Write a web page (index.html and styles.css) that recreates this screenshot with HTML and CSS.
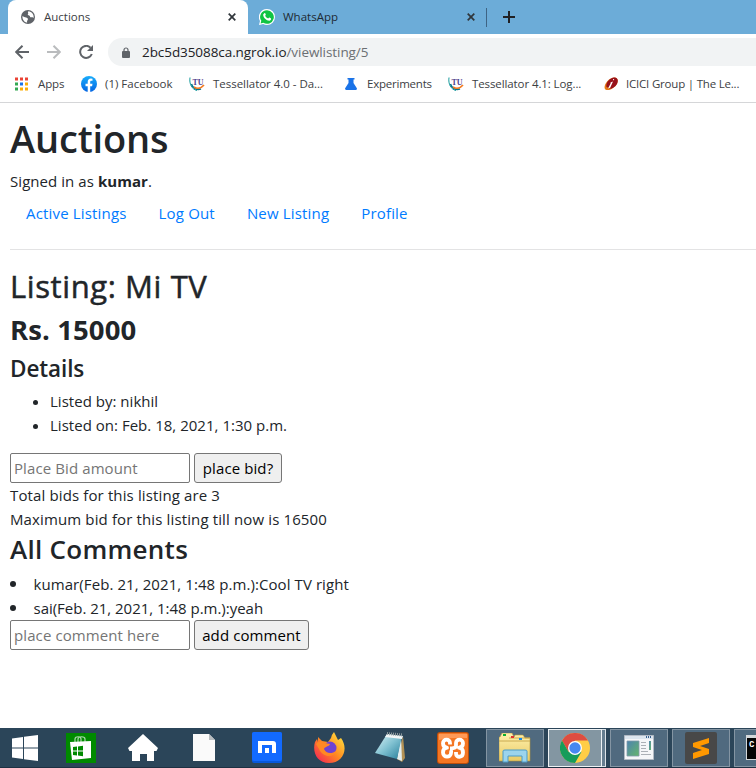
FILE: index.html
```html
<!DOCTYPE html>
<html lang="en">
<head>
<meta charset="utf-8">
<title>Auctions</title>
<link rel="stylesheet" href="styles.css">
</head>
<body>
<svg width="0" height="0" class="defs">
  <defs>
    <symbol id="tu" viewBox="0 0 16 16">
      <path d="M1 1.500C0 8 3 13.500 8 14.500" fill="none" stroke="#159a9c" stroke-width="1"/>
      <path d="M2.500 8c1 4 5 6.500 9.500 5" fill="none" stroke="#08758b" stroke-width="1.500"/>
      <path d="M5 11c3 2 7 1.500 10-2" fill="none" stroke="#f47b20" stroke-width="1.700"/>
      <text x="3.500" y="8.700" font-family="Liberation Serif, serif" font-weight="700" font-size="8.500" textLength="11" lengthAdjust="spacingAndGlyphs" fill="#51428b">TU</text>
    </symbol>
    <linearGradient id="fb" x2="0" y2="1"><stop stop-color="#19adfb"/><stop offset="1" stop-color="#0565e2"/></linearGradient>
    <linearGradient id="fox" x1="1" y1="0" x2="0" y2="1"><stop stop-color="#fff044"/><stop offset=".5" stop-color="#ff8a20"/><stop offset="1" stop-color="#f3155e"/></linearGradient>
    <linearGradient id="note" x2="1" y2="1"><stop stop-color="#e0f6fa"/><stop offset=".5" stop-color="#80c1d1"/><stop offset="1" stop-color="#267e9b"/></linearGradient>
    <linearGradient id="folder" x2="0" y2="1"><stop stop-color="#fff1ae"/><stop offset="1" stop-color="#e9cb66"/></linearGradient>
    <linearGradient id="pane" x2="1" y2="1"><stop stop-color="#4e83b0"/><stop offset="1" stop-color="#65b66b"/></linearGradient>
  </defs>
</svg>
<header class="browser">
  <div class="tabs">
    <div class="tab tab-active">
      <svg class="globe" viewBox="0 0 14 14"><circle cx="7" cy="7" r="7" fill="#5f6368"/><path d="M1.500 6C3 7.500 5 7 6.500 8.200 8 9.500 5.500 10 6.200 12.600 3.500 12.500 1 9.500 1.500 6ZM7.500 1.200C6 2.500 8 2.700 7 4 5.800 5.300 9 5 9 6.500c0 1.500 2.200 0 3.700 1.500C13 4 10.500 1.500 7.500 1.200Z" fill="#fff"/></svg>
      <span>Auctions</span>
      <svg class="close" viewBox="0 0 8 8"><path d="m.7.700 6.600 6.600m0-6.600L.7 7.300"/></svg>
    </div>
    <div class="tab tab-idle">
      <svg class="wa" viewBox="0 0 16 16"><path d="M8 0a8 8 0 0 1 0 16c-1.400 0-2.700-.3-3.800-.9L0 16l1-4A8 8 0 0 1 8 0Z" fill="#fff"/><path d="M8 1.200a6.800 6.800 0 1 1-3.700 12.500l-2.700.7.700-2.600A6.800 6.800 0 0 1 8 1.200Z" fill="#10c443"/><path d="M5.300 4.200c.5-.4.900-.1 1 .2l.5 1.200c.1.500-.6.900-.6 1.200.6 1.300 1.700 2.200 3 2.600.3 0 .8-1 1.200-.8l1.400.7c.8.600-.2 2.500-1.500 2.500C7.200 11.600 4.300 8.500 4.200 6c0-.8.500-1.300 1.100-1.800Z" fill="#fff"/></svg>
      <span>WhatsApp</span>
      <svg class="close" viewBox="0 0 8 8"><path d="m.7.700 6.600 6.600m0-6.600L.7 7.300"/></svg>
    </div>
    <i class="tab-divider"></i>
    <svg class="plus" viewBox="0 0 12 12"><path d="M6 0v12M0 6h12"/></svg>
  </div>
  <div class="toolbar">
    <svg class="arrow" viewBox="0 0 14 14"><path d="M14 7H1.500M7.500.700 1.200 7l6.300 6.300"/></svg>
    <svg class="arrow forward" viewBox="0 0 14 14"><path d="M0 7h12.500M6.500.700 12.800 7l-6.300 6.300"/></svg>
    <svg class="reload" viewBox="0 0 14 14"><path d="M11.500 2.700A6 6 0 1 0 12.800 9" fill="none" stroke="#5f6368" stroke-width="2"/><path d="M14 0v6H8Z" fill="#5f6368"/></svg>
    <div class="omnibox">
      <svg class="lock" viewBox="0 0 8 11"><path d="M2 5V3a2 2 0 0 1 4 0v2" fill="none" stroke="#5f6368" stroke-width="1.200"/><rect y="4" width="8" height="7" rx="1" fill="#5f6368"/></svg>
      <span class="url">2bc5d35088ca.ngrok.io<em>/viewlisting/5</em></span>
    </div>
  </div>
  <nav class="bookmarks">
    <a class="bm bm-apps"><svg viewBox="0 0 13 13"><path d="M0 0h3v3H0zM5 0h3v3H5zM10 0h3v3h-3z" fill="#ea4335"/><path d="M0 5h3v3H0zM0 10h3v3H0z" fill="#34a853"/><path d="M5 5h3v3H5z" fill="#1a73e8"/><path d="M10 5h3v3h-3zM5 10h3v3H5zM10 10h3v3h-3z" fill="#fbad05"/></svg><span>Apps</span></a>
    <a class="bm bm-fb"><svg viewBox="0 0 16 16"><circle cx="8" cy="8" r="8" fill="url(#fb)"/><path d="M6.700 16v-5.800H4.500V7.800h2.200V6c0-2.200 1.200-3.400 3.200-3.400l1.600.2v2h-1.100c-.9 0-1.200.5-1.200 1.200v1.800h2.300l-.4 2.400H9.200V16Z" fill="#fff"/></svg><span>(1) Facebook</span></a>
    <a class="bm bm-t0"><svg viewBox="0 0 16 16"><use href="#tu"/></svg><span>Tessellator 4.0 - Da...</span></a>
    <a class="bm bm-exp"><svg viewBox="0 0 12 12"><path d="M2.500 0h7v1.500h-1V5l3.200 5c.7 1-.1 2-1 2H1.300c-1 0-1.700-1-1-2l3.200-5V1.500h-1Z" fill="#1a73e8"/></svg><span>Experiments</span></a>
    <a class="bm bm-t1"><svg viewBox="0 0 16 16"><use href="#tu"/></svg><span>Tessellator 4.1: Log...</span></a>
    <a class="bm bm-icici"><svg viewBox="0 0 14 14"><path d="M1 12C-1 9 4 1 10 .5c5-.3 4.500 5 1.500 8.500C7 13.500 2 14 1 12Z" fill="#e67a17"/><path d="M2.500 10C1.500 6 5.500 1 10 .5c5-.3 4.500 5 1.500 8.500C9.500 11 7 12 6 11.500Z" fill="#98121b"/><path d="M9 2.200c1.800-.5 1.500 1 .2 1.300M6.500 5.500 9 4.600 6.200 10.800 4 11.500l2.600-5Z" fill="#fff"/></svg><span>ICICI Group | The Le...</span></a>
  </nav>
</header>
<main class="page">
  <h1>Auctions</h1>
  <div class="line signed">Signed in as <strong>kumar</strong>.</div>
  <ul class="nav">
    <li><a>Active Listings</a></li>
    <li><a>Log Out</a></li>
    <li><a>New Listing</a></li>
    <li><a>Profile</a></li>
  </ul>
  <hr>
  <h2>Listing: Mi TV</h2>
  <h3 class="price">Rs. 15000</h3>
  <h4>Details</h4>
  <ul class="details">
    <li>Listed by: nikhil</li>
    <li>Listed on: Feb. 18, 2021, 1:30 p.m.</li>
  </ul>
  <form class="row"><input type="text" placeholder="Place Bid amount"><button type="button" class="b1">place bid?</button></form>
  <div class="line">Total bids for this listing are 3</div>
  <div class="line">Maximum bid for this listing till now is 16500</div>
  <h3 class="all">All Comments</h3>
  <ul class="comments">
    <li>kumar(Feb. 21, 2021, 1:48 p.m.):Cool TV right</li>
    <li class="tight">sai(Feb. 21, 2021, 1:48 p.m.):yeah</li>
  </ul>
  <form class="row"><input type="text" placeholder="place comment here"><button type="button" class="b2">add comment</button></form>
</main>
<footer class="taskbar">
  <div class="slot first"><svg width="26" height="26" viewBox="0 0 26 26"><path d="M0 3.500 11 2v10.500H0ZM12 1.800 26 0v12.500H12ZM0 13.500h11V24L0 22.500ZM12 13.500h14V26l-14-1.800Z" fill="#fff"/></svg></div>
  <div class="slot"><svg width="30" height="30" viewBox="0 0 30 30"><path fill="#008a00" d="M0 0h30v30H0z"/><path d="M9 10V6c0-3 6-3 6 0v3m-3 0V6c0-3 7-3 7 0v3" fill="none" stroke="#a9d8a9" stroke-width="1.200"/><path d="m4 9 21-1v17L6 27Z" fill="#fff"/><path d="m7 14 4-.5v4H7Zm5-.6 5-.6v4.700h-5ZM7 18.500h4v4L7 22Zm5 0h5v4.700l-5-.6Z" fill="#008a00"/></svg></div>
  <div class="slot"><svg width="30" height="28" viewBox="0 0 30 28"><path d="m15 0 15 14-1.500 3H26v10h-7v-7h-7v7H4V17H1.500L0 14Z" fill="#fff"/></svg></div>
  <div class="slot page-icon"><svg width="22" height="27" viewBox="0 0 22 27"><path d="M0 0h16l6 6v21H0Z" fill="#fafafa"/><path d="M16 0v6h6Z" fill="#b8bcbf"/></svg></div>
  <div class="slot"><svg width="30" height="31" viewBox="0 0 30 31"><rect width="30" height="31" rx="2" fill="#0758dc"/><rect width="30" height="29" rx="2" fill="#126aff"/><path d="M6 9h15q3 0 3 3v9h-4v-8H10v8H6Z" fill="#fff"/><path d="M13 16h4v5h-4z" fill="#fff"/></svg></div>
  <div class="slot"><svg width="31" height="31" viewBox="0 0 31 31"><path d="M4 5 8 9l6 1 3-4q1-4 3-6l4 8 3-2c8 11 2 25-12 25C3 31-2 20 1 10l2-3 1 3Z" fill="url(#fox)"/><circle cx="16" cy="16" r="6.500" fill="#6f43d2"/><path d="M2 12c4-4 8-2 9-1l5 1c-1 3-5 2-6 5 2 5 8 5 12 2-2 7-13 7-17-2Z" fill="#ff8824"/></svg></div>
  <div class="slot"><svg width="32" height="31" viewBox="0 0 32 31"><path d="m28 4 2 22-3 4-5-3Z" fill="#b29155"/><path d="m26 4 1 25-5-2Z" fill="#e3edef"/><path d="m12 2 15 2-5 23-22-6Z" fill="url(#note)"/><path d="m12 2 16 2-1 3-17-2Z" fill="#f2f6f7"/><path d="m12 1.500 16 1.500" stroke="#8e9b9e" stroke-width="3" stroke-dasharray="1 1"/></svg></div>
  <div class="slot"><svg width="32" height="32" viewBox="0 0 32 32"><rect width="32" height="32" rx="3" fill="#bc4d0b"/><rect x="1" y="1" width="30" height="30" rx="2" fill="#f47623"/><path d="M2 2h28v4Q16 5 2 8Z" fill="#ff9a57"/><path d="M13 12.500V11C13 6.500 6 6.500 6 11.200c0 2.300 1.500 4.200 4 4.500C7.500 16 6 17.700 6 20.500c0 5.500 8 5.500 8 .500 0-2 .5-2.500 2-2.500M13 16.500c3 0 6-.500 6-3V11c0-4.500 7-4.500 7 .2 0 2.300-1.500 4.200-4 4.500 2.500.3 4 2 4 4.800 0 5.500-7 5.500-7 1V20" fill="none" stroke="#fff" stroke-width="3.800" stroke-linejoin="round"/></svg></div>
  <div class="task t-folder"><svg width="32" height="30" viewBox="0 0 32 30"><path d="M1 4 3 0h10l2 4 1-2h8l2 3h5v23H0V4Z" fill="url(#folder)" stroke="#b49439" stroke-width=".6"/><path d="M0 8h31M10 5h21" stroke="#caaa50"/><path d="M4 1h3v2H4z" fill="#0baf30"/><path d="M12 3h3v2h-3z" fill="#e3342f"/><path d="M20 5h3v2h-3z" fill="#1688e8"/><path d="M4 18q0-1 2-1h20q2 0 2 1v11h-5v-6H9v6H4Z" fill="#9cd4ed" stroke="#4c9cc8"/></svg></div>
  <div class="task t-chrome"><svg width="30" height="30" viewBox="0 0 30 30"><circle cx="15" cy="15" r="15" fill="#ffcd46"/><path d="M2 7.500A15 15 0 0 1 28 7.500H15L8.500 18.800Z" fill="#dd4d42"/><path d="M2 7.500A15 15 0 0 0 15 30l6.500-11.200H8.500Z" fill="#169c5a"/><circle cx="15" cy="15" r="7" fill="#fff"/><circle cx="15" cy="15" r="5.700" fill="#4688f1"/></svg></div>
  <i class="stack"></i>
  <div class="task"><svg width="30" height="25" viewBox="0 0 30 25"><path d="M.5.500h29v24H.5Z" fill="#f5f6f8" stroke="#b2bac4"/><path d="M1 1h28v3H1z" fill="#dce5ee"/><path d="M22 2h6" stroke="#355d8b" stroke-width="2" stroke-dasharray="1 1"/><path d="M3 6h12v15H3z" fill="url(#pane)" stroke="#809aaa" stroke-width=".8"/><path d="M17 7.500h5m-5 3h5m-5 3h5m-5 3h7m-7 3h10" stroke="#abb0b6"/><path d="M25 6h2v9h-2z" fill="url(#pane)"/></svg></div>
  <div class="task"><svg width="32" height="32" viewBox="0 0 32 32"><rect width="32" height="32" rx="2" fill="#484848"/><path d="m8 11 16-5v5l-9 3 9 3v5L8 27v-6l9-3-9-3Z" fill="#ff9800"/></svg></div>
  <div class="task t-cmd"><svg width="10" height="25" viewBox="0 0 10 25"><path fill="#050505" d="M0 0h10v25H0z"/><path fill="#d4d7da" d="M0 0h10v3H0zM0 0h1v25H0zM0 24h10v1H0z"/><text x="3" y="12" font-family="Liberation Mono, monospace" font-size="9" font-weight="700" fill="#fff">C</text></svg></div>
</footer>
</body>
</html>
```

FILE: styles.css
```css
* { box-sizing: border-box; }
body { margin: 0; width: 756px; height: 768px; overflow: hidden; display: flex; flex-direction: column; background: #fff; color: #212529; font: 15px/24px "Open Sans", sans-serif; white-space: nowrap; }
.defs { position: absolute; }
svg { display: block; flex: none; }
.browser { height: 103px; flex: none; border-bottom: 1px solid #d5d6d8; font-size: 11.5px; }
.tabs { height: 34px; background: #6cacd8; display: flex; align-items: center; padding-left: 8px; }
.tab { height: 34px; display: flex; align-items: center; color: #3c4043; }
.tab span { flex: 1; }
.tab-active { width: 240px; background: #fff; border-radius: 8px 8px 0 0; padding: 0 12px 0 13px; }
.globe { width: 14px; height: 14px; margin-right: 9px; }
.tab-idle { width: 238px; padding: 0 11px; color: #202a33; }
.wa { width: 16px; height: 16px; margin-right: 8px; }
.close { width: 8px; height: 8px; fill: none; stroke: #30363b; stroke-width: 1.7; }
.tab-divider { width: 1px; height: 19px; background: #3e6484; }
.plus { width: 12px; height: 12px; margin-left: 16px; stroke: #202124; stroke-width: 2; }
.toolbar { height: 38px; display: flex; align-items: center; padding: 0 0 2px 15px; }
.arrow { width: 14px; height: 14px; fill: none; stroke: #5f6368; stroke-width: 2; }
.forward { stroke: #babcbe; margin-left: 18px; }
.reload { width: 14px; height: 14px; margin-left: 18px; }
.omnibox { margin-left: 15px; flex: 1; height: 28px; border-radius: 14px 0 0 14px; background: #f1f3f4; display: flex; align-items: center; padding-left: 14px; }
.lock { width: 8px; height: 11px; margin-right: 12px; }
.url { font-size: 13.5px; letter-spacing: -.07px; color: #202124; }
.url em { font-style: normal; color: #6b6f73; }
.bookmarks { height: 24px; display: flex; align-items: center; color: #3c4043; letter-spacing: -.1px; }
.bm { display: flex; align-items: center; flex: none; }
.bm-apps { width: 66px; margin-left: 15px; gap: 10px; }
.bm-fb { width: 108px; gap: 8px; letter-spacing: 0; }
.bm svg { height: 16px; width: 16px; }
.bm.bm-apps svg { width: 13px; }
.bm-t0 { width: 156px; gap: 8px; letter-spacing: -.03px; }
.bm-exp { width: 103px; gap: 10px; letter-spacing: -.22px; }
.bm.bm-exp svg { width: 12px; }
.bm-t1 { width: 156px; gap: 8px; }
.bm-icici { gap: 8px; letter-spacing: -.2px; }
.bm.bm-icici svg { width: 14px; }
.page { flex: 1; padding: 10px 0 0 10px; }
h1, h2, h3, h4 { margin: 0; font-weight: 600; }
h1 { font-size: 38px; line-height: 50px; height: 56px; letter-spacing: -.15px; }
.line { height: 24px; letter-spacing: .13px; }
.signed { letter-spacing: .06px; }
.signed strong { font-weight: 700; }
.nav { list-style: none; display: flex; margin: 0; padding: 8px 0; height: 40px; color: #007bff; letter-spacing: .17px; }
.nav li { padding: 0 16px; }
hr { margin: 16px 0 15px; border: 0; height: 1px; background: #e3e3e4; }
h2 { font-size: 31px; font-weight: 400; line-height: 43px; height: 46px; letter-spacing: .6px; -webkit-text-stroke: .5px #212529; }
.price { font-size: 27.5px; font-weight: 700; line-height: 38px; height: 41px; letter-spacing: .1px; }
h4 { font-size: 22.5px; line-height: 33px; height: 37px; letter-spacing: -.1px; }
.details { margin: 0 0 16px; padding-left: 40px; letter-spacing: .02px; }
.row { display: flex; gap: 4px; height: 30px; margin: 0; }
.row input { width: 180px; height: 30px; border: 1px solid #767676; border-radius: 2px; padding: 1px 3px; font: inherit; letter-spacing: .1px; }
.row input::placeholder { color: #757575; opacity: 1; }
.row button { height: 30px; border: 1px solid #767676; border-radius: 3px; background: #efefef; color: #000; padding: 0; font: inherit; letter-spacing: .1px; }
.b1 { width: 88px; }
.b2 { width: 115px; }
.all { font-size: 26px; line-height: 36px; height: 41px; letter-spacing: .27px; }
.comments { margin: 0; padding: 0; list-style-position: inside; letter-spacing: .08px; }
.comments .tight { letter-spacing: -.02px; }
.comments li::marker { font-size: 16.5px; }
.taskbar { height: 40px; flex: none; background: #2b4559; display: flex; align-items: center; border-bottom: 1px solid #1d3042; }
.slot { width: 62px; display: flex; justify-content: center; flex: none; }
.page-icon { padding-right: 2px; }
.first { width: 50px; }
.task { flex: none; width: 58px; height: 38px; display: flex; align-items: center; justify-content: center; border: 1px solid #8495a3; background: #506a7f; margin-right: 4px; }
.t-folder { margin-left: 2px; }
.t-chrome { width: 54px; margin-right: 0; border-color: #eef2f4; background: #8396a2; }
.stack { width: 4px; height: 38px; border: 1px solid #dce3e8; border-left: 0; background: #667e90; margin-right: 4px; flex: none; }
.t-cmd { width: 22px; margin-right: 0; border-right: 0; justify-content: flex-end; }
```
